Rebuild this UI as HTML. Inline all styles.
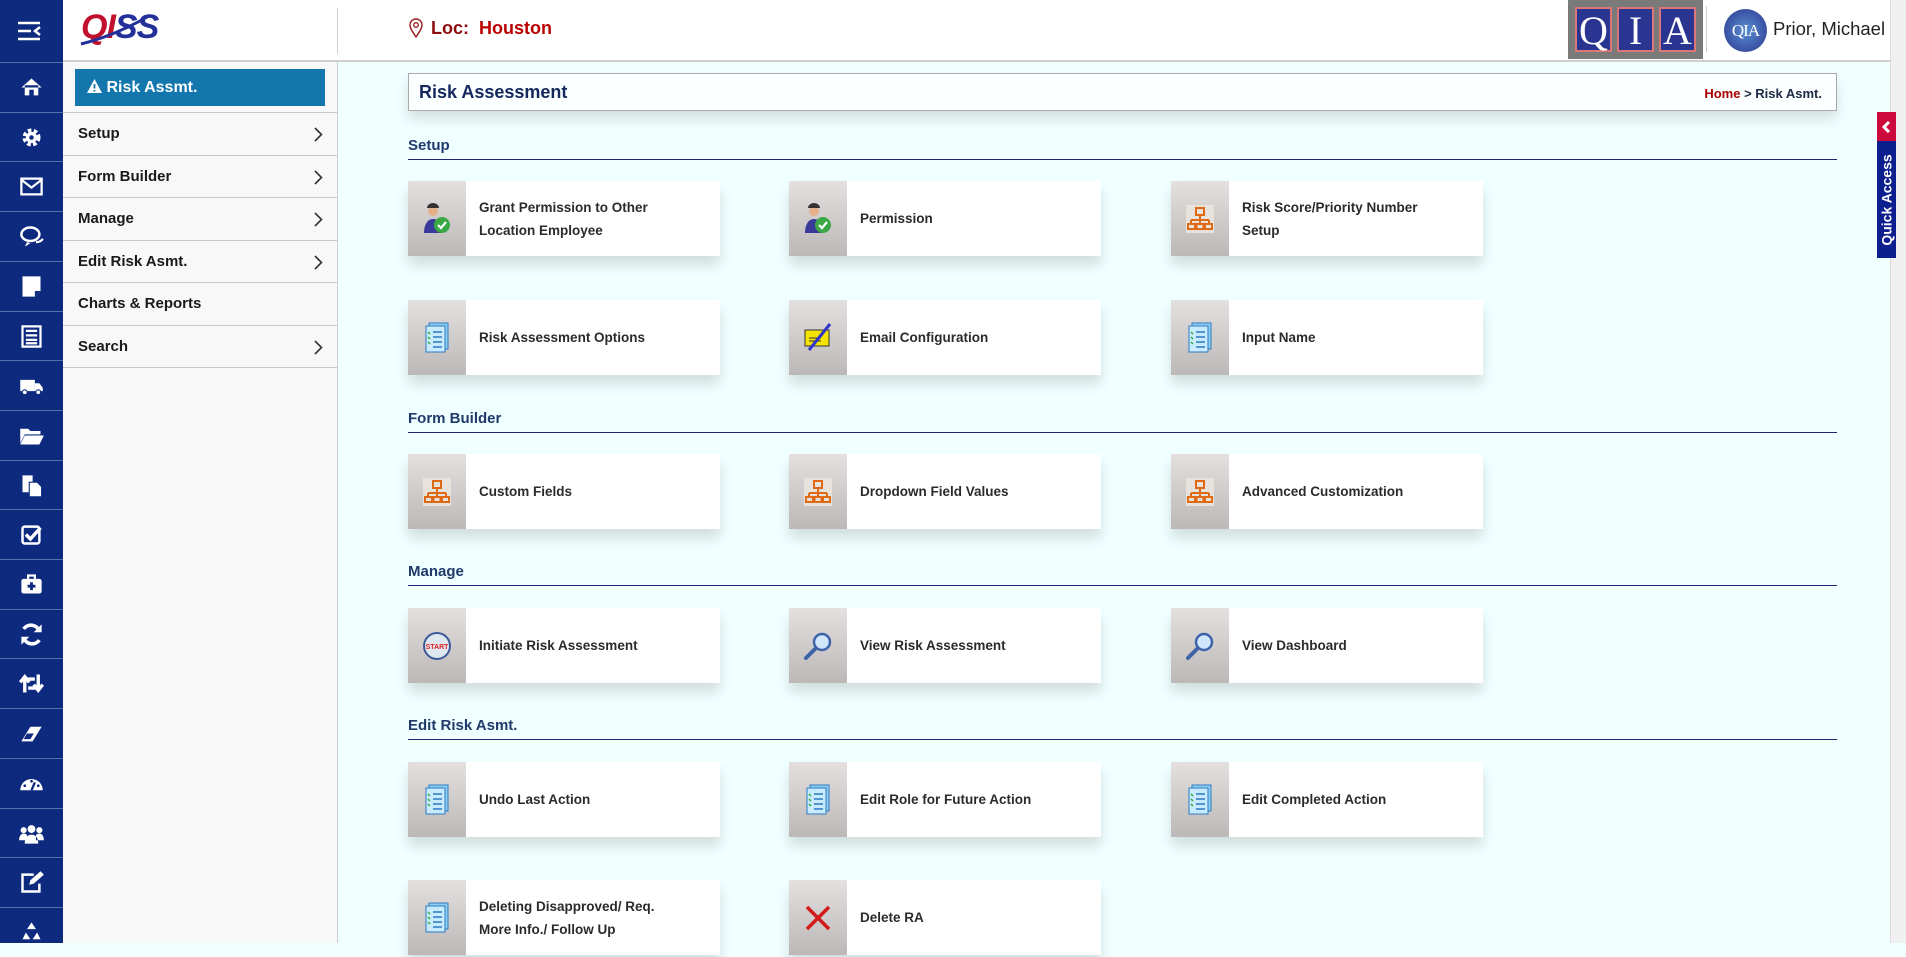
<!DOCTYPE html>
<html><head><meta charset="utf-8"><style>
*{margin:0;padding:0;box-sizing:border-box}
body{width:1906px;height:943px;overflow:hidden;background:#f0ffff;font-family:"Liberation Sans",sans-serif;position:relative}
.abs{position:absolute}
#bar{left:0;top:0;width:63px;height:943px;background:#0d2a7f}
#bar .ic{position:absolute;left:0;width:63px;height:50px;border-top:1px solid #5a6fae;display:flex;align-items:center;justify-content:center}
#hdr{left:63px;top:0;width:1827px;height:62px;background:#fff;border-bottom:2px solid #cfcfcf}
#side{left:63px;top:62px;width:275px;height:881px;background:#f8f8f8;border-right:1px solid #cfcfcf}
.mi{position:absolute;left:0;width:274px;height:43px;border-top:1px solid #c9c9c9;font-weight:bold;font-size:15px;color:#1a1a1a;padding-left:15px;line-height:42px}
.mi .ch{position:absolute;right:14px;top:14px}
.sec{position:absolute;left:408px;width:1429px;border-bottom:1.5px solid #1c2670;font-weight:bold;font-size:15px;color:#1f3a6b;height:23px}
.card{position:absolute;width:312px;height:75px;background:#fff;box-shadow:0 9px 12px rgba(0,0,0,0.13)}
.card .ico{position:absolute;left:0;top:0;width:58px;height:75px;background:linear-gradient(#e4e0e0,#bdb8b8);display:flex;align-items:center;justify-content:center}
.card .t{position:absolute;left:71px;top:0;height:75px;width:235px;display:flex;align-items:center;font-weight:bold;font-size:13.5px;color:#2b2b2b;line-height:23px}
</style></head><body>
<div id="bar" class="abs">
 <div style="position:absolute;left:16px;top:20px">
  <svg width="28" height="22" viewBox="0 0 28 22"><g stroke="#fff" stroke-width="2.5" fill="none"><path d="M2 3h22M2 11h13M2 19h22M24 7l-5 4 5 4"/></g></svg></div>
</div>
<div id="hdr" class="abs">
 <div class="abs" style="left:18px;top:8px;font-size:34px;font-weight:bold;color:#c0102e;letter-spacing:-1px;font-style:italic">QI<span style="color:#24309a">SS</span></div>
 <svg class="abs" style="left:16px;top:14px" width="72" height="34"><path d="M2 30 Q35 22 70 2" stroke="#24309a" stroke-width="3" fill="none"/></svg>
 <div class="abs" style="left:274px;top:8px;width:1px;height:46px;background:#d0d0d0"></div>
 <svg class="abs" style="left:346px;top:18px" width="14" height="20" viewBox="0 0 14 20"><path d="M7 19C3 13 1 10 1 7a6 6 0 0 1 12 0c0 3-2 6-6 12z" fill="none" stroke="#9b1c1c" stroke-width="1.4"/><circle cx="7" cy="7" r="2.3" fill="none" stroke="#9b1c1c" stroke-width="1.3"/></svg>
 <div class="abs" style="left:368px;top:18px;font-size:18px;font-weight:bold;color:#8b0d0d">Loc:&nbsp; <span style="color:#b00">Houston</span></div>
 <div class="abs" style="left:1505px;top:0;width:135px;height:59px;background:#7a7a7a;display:flex;gap:5px;padding:7px 7px;justify-content:center">
  <div style="width:37px;height:45px;background:#2a3591;border:2px solid #d77;color:#fff;font:40px 'Liberation Serif',serif;text-align:center;line-height:44px">Q</div>
  <div style="width:37px;height:45px;background:#2a3591;border:2px solid #d77;color:#fff;font:40px 'Liberation Serif',serif;text-align:center;line-height:44px">I</div>
  <div style="width:37px;height:45px;background:#2a3591;border:2px solid #d77;color:#fff;font:40px 'Liberation Serif',serif;text-align:center;line-height:44px">A</div>
 </div>
 <div class="abs" style="left:1643px;top:6px;width:1px;height:46px;background:#ccc"></div>
 <div class="abs" style="left:1661px;top:9px;width:43px;height:43px;border-radius:50%;background:radial-gradient(#5a8fd0,#2a3591);color:#fff;font:17px 'Liberation Serif',serif;text-align:center;line-height:43px;letter-spacing:-1px">QIA</div>
 <div class="abs" style="left:1710px;top:18px;font-size:18.5px;color:#222;white-space:nowrap">Prior, Michael</div>
</div>
<div class="abs" style="left:1890px;top:0;width:16px;height:943px;background:#f0f0f0;border-left:1px solid #ddd"></div>
<div id="side" class="abs">
 <div class="abs" style="left:12px;top:7px;width:250px;height:37px;background:#1376ad;color:#fff;font-weight:bold;font-size:16px;line-height:37px;padding-left:12px">
  <svg width="15" height="14" viewBox="0 0 15 14" style="vertical-align:-1px"><path d="M7.5 0L15 14H0z" fill="#fff"/><path d="M7.5 5v4.5M7.5 11v1.5" stroke="#1376ad" stroke-width="1.8"/></svg> Risk Assmt.</div>
 <div class="mi" style="top:50px">Setup<svg class="ch" width="9" height="15"><path d="M1 1l6.5 6.5L1 14" stroke="#333" stroke-width="1.6" fill="none"/></svg></div>
 <div class="mi" style="top:93px">Form Builder<svg class="ch" width="9" height="15"><path d="M1 1l6.5 6.5L1 14" stroke="#333" stroke-width="1.6" fill="none"/></svg></div>
 <div class="mi" style="top:135px">Manage<svg class="ch" width="9" height="15"><path d="M1 1l6.5 6.5L1 14" stroke="#333" stroke-width="1.6" fill="none"/></svg></div>
 <div class="mi" style="top:178px">Edit Risk Asmt.<svg class="ch" width="9" height="15"><path d="M1 1l6.5 6.5L1 14" stroke="#333" stroke-width="1.6" fill="none"/></svg></div>
 <div class="mi" style="top:220px">Charts &amp; Reports</div>
 <div class="mi" style="top:263px;border-bottom:1px solid #c9c9c9">Search<svg class="ch" width="9" height="15"><path d="M1 1l6.5 6.5L1 14" stroke="#333" stroke-width="1.6" fill="none"/></svg></div>
</div>
<div class="abs" style="left:408px;top:73px;width:1429px;height:38px;background:#fbffff;border:1px solid #aaa;box-shadow:0 8px 12px rgba(0,0,0,0.12)">
 <div class="abs" style="left:10px;top:8px;font-size:18px;font-weight:bold;color:#14275e">Risk Assessment</div>
 <div class="abs" style="right:14px;top:12px;font-size:13px;font-weight:bold;color:#1d2a44"><span style="color:#a00">Home</span> &gt; Risk Asmt.</div>
</div>
<div class="abs" style="left:1877px;top:112px;width:19px;height:146px;background:#0d1e8f">
 <div style="height:29px;background:#cc0a3c;display:flex;align-items:center;justify-content:center"><svg width="10" height="12"><path d="M7 1L2 6l5 5" stroke="#fff" stroke-width="3" fill="none"/></svg></div>
 <div style="position:absolute;left:0;top:29px;width:19px;height:117px;display:flex;align-items:center;justify-content:center"><div style="transform:rotate(-90deg);white-space:nowrap;color:#fff;font-weight:bold;font-size:14px">Quick Access</div></div>
</div>

<div class="sec" style="top:137px">Setup</div>
<div class="sec" style="top:410px">Form Builder</div>
<div class="sec" style="top:563px">Manage</div>
<div class="sec" style="top:717px">Edit Risk Asmt.</div>

<div id="cards"></div>
<script>
var P='<svg width="30" height="32" viewBox="0 0 30 32"><circle cx="11" cy="8" r="5" fill="#e3b08a"/><path d="M5 5a6 5 0 0 1 12 0z" fill="#333"/><path d="M2 30c0-9 4-14 9-14s9 4 9 14z" fill="#3a3a9a"/><circle cx="20" cy="22" r="8" fill="#3aa845"/><path d="M16 22l3 3 5-6" stroke="#fff" stroke-width="2.2" fill="none"/></svg>';
var D='<svg width="26" height="32" viewBox="0 0 26 32"><rect x="5" y="1" width="19" height="26" fill="#8fcdf0" stroke="#2b7bc2"/><rect x="2" y="4" width="19" height="26" fill="#c8ebff" stroke="#2b7bc2"/><g stroke="#2b7bc2" stroke-width="1.5"><path d="M9 10h9M9 15h9M9 20h9M9 25h9"/></g><g stroke="#3a3" stroke-width="1.5"><path d="M4 10l2 2M4 15l2 2M4 20l2 2"/></g></svg>';
var O='<svg width="28" height="28" viewBox="0 0 28 28" style="background:#e8e2dc"><g fill="none" stroke="#e06a14" stroke-width="2"><rect x="10" y="3" width="8" height="7"/><path d="M14 10v5M5 15h18M5 15v4M14 15v4M23 15v4"/><rect x="2" y="19" width="7" height="5"/><rect x="10.5" y="19" width="7" height="5"/><rect x="19" y="19" width="7" height="5"/></g></svg>';
var M='<svg width="30" height="32" viewBox="0 0 30 32"><rect x="2" y="8" width="24" height="16" fill="#f5e400" stroke="#333"/><path d="M6 16h12M6 19h12" stroke="#333"/><path d="M27 2L6 28" stroke="#2d36c8" stroke-width="3"/></svg>';
var S='<svg width="32" height="32" viewBox="0 0 32 32"><path d="M4 28l10-10" stroke="#3e63a8" stroke-width="4" stroke-linecap="round"/><circle cx="20" cy="12" r="8" fill="#cfe6fb" stroke="#3e63a8" stroke-width="2.5"/></svg>';
var T='<svg width="30" height="30" viewBox="0 0 30 30"><circle cx="15" cy="15" r="13" fill="#dfe7ef" stroke="#3c5a9a" stroke-width="2"/><text x="15" y="18" font-size="7" text-anchor="middle" font-weight="bold" fill="#d22" font-family="Liberation Sans">START</text></svg>';
var X='<svg width="30" height="30" viewBox="0 0 30 30"><path d="M4 4l22 22M26 4L4 26" stroke="#d21a1a" stroke-width="3.5"/></svg>';
var xs=[408,789,1171];
var rows=[[181,[[P,'Grant Permission to Other<br>Location Employee'],[P,'Permission'],[O,'Risk Score/Priority Number<br>Setup']]],
[300,[[D,'Risk Assessment Options'],[M,'Email Configuration'],[D,'Input Name']]],
[454,[[O,'Custom Fields'],[O,'Dropdown Field Values'],[O,'Advanced Customization']]],
[608,[[T,'Initiate Risk Assessment'],[S,'View Risk Assessment'],[S,'View Dashboard']]],
[762,[[D,'Undo Last Action'],[D,'Edit Role for Future Action'],[D,'Edit Completed Action']]],
[880,[[D,'Deleting Disapproved/ Req.<br>More Info./ Follow Up'],[X,'Delete RA']]]];
var h='';rows.forEach(function(r){r[1].forEach(function(c,i){h+='<div class="card" style="left:'+xs[i]+'px;top:'+r[0]+'px"><div class="ico">'+c[0]+'</div><div class="t"><div>'+c[1]+'</div></div></div>';});});
document.getElementById('cards').innerHTML=h;
var icons=[
'<path d="M3 12L12 4l9 8M6 10v9h4v-5h4v5h4v-9" fill="#fff"/>',
'<circle cx="12" cy="12" r="6" fill="none" stroke="#fff" stroke-width="4" stroke-dasharray="3 2"/><circle cx="12" cy="12" r="5" fill="#fff"/><circle cx="12" cy="12" r="2" fill="#0d2a7f"/>',
'<rect x="3" y="5" width="18" height="14" fill="none" stroke="#fff" stroke-width="2"/><path d="M3 6l9 7 9-7" fill="none" stroke="#fff" stroke-width="2"/>',
'<ellipse cx="11" cy="10" rx="8" ry="6" fill="none" stroke="#fff" stroke-width="2.2"/><path d="M8 17l-2 4 5-3" fill="#fff"/><path d="M16 17c3 0 5-1 6-3" stroke="#fff" stroke-width="2" fill="none"/>',
'<path d="M4 3h16v13l-5 5H4z" fill="#fff"/><path d="M15 21v-5h5" fill="#0d2a7f"/>',
'<rect x="4" y="3" width="16" height="18" fill="none" stroke="#fff" stroke-width="2"/><path d="M7 7h10M7 11h10M7 15h10M7 18h10" stroke="#fff" stroke-width="2"/>',
'<rect x="2" y="7" width="13" height="10" fill="#fff"/><path d="M15 10h4l3 4v3h-7z" fill="#fff"/><circle cx="6" cy="18" r="2.2" fill="#fff" stroke="#0d2a7f"/><circle cx="18" cy="18" r="2.2" fill="#fff" stroke="#0d2a7f"/>',
'<path d="M2 6h7l2 2h9v3H6L2 19z" fill="#fff"/><path d="M6 12h17l-4 8H2z" fill="#fff"/>',
'<rect x="4" y="3" width="9" height="15" fill="#fff"/><path d="M10 9h7l4 4v9H10z" fill="#fff" stroke="#0d2a7f"/>',
'<rect x="4" y="5" width="15" height="15" rx="2" fill="none" stroke="#fff" stroke-width="2.2"/><path d="M7 12l4 4 9-10" stroke="#fff" stroke-width="3" fill="none"/>',
'<rect x="3" y="7" width="18" height="13" rx="2" fill="#fff"/><path d="M9 7V4h6v3" stroke="#fff" stroke-width="2" fill="none"/><path d="M12 10v7M8.5 13.5h7" stroke="#0d2a7f" stroke-width="2.5"/>',
'<path d="M19 9a8 8 0 0 0-14-2M5 15a8 8 0 0 0 14 2" stroke="#fff" stroke-width="3.2" fill="none"/><path d="M21 3v7h-7zM3 21v-7h7z" fill="#fff"/>',
'<path d="M6 20V8M2 11l4-5 4 5M6 8h9M18 4v12M14 13l4 5 4-5M18 16H9" stroke="#fff" stroke-width="3" fill="none"/>',
'<path d="M3 19l8-13h10l-8 13z" fill="#fff"/><path d="M5 17l3-5h6l-3 5z" fill="#0d2a7f"/>',
'<path d="M2 18a10 10 0 0 1 20 0z" fill="#fff"/><path d="M12 18l3-7" stroke="#0d2a7f" stroke-width="2"/><circle cx="6" cy="14" r="1.2" fill="#0d2a7f"/><circle cx="18" cy="14" r="1.2" fill="#0d2a7f"/><circle cx="12" cy="10" r="1.2" fill="#0d2a7f"/>',
'<circle cx="12" cy="8" r="3.5" fill="#fff"/><circle cx="5" cy="9" r="2.7" fill="#fff"/><circle cx="19" cy="9" r="2.7" fill="#fff"/><path d="M6 21c0-6 3-8 6-8s6 2 6 8zM1 18c0-4 2-6 4-6s3 1 3 2v4zM23 18c0-4-2-6-4-6s-3 1-3 2v4z" fill="#fff"/>',
'<path d="M14 5H4v15h15v-7" stroke="#fff" stroke-width="2.2" fill="none"/><path d="M10 14l1-4 9-8 3 3-9 8z" fill="#fff"/>',
'<path d="M12 3l4 6h-8zM4 18l3-6 4 6zM20 18l-3-6-4 6z" fill="#fff"/>'];
var b='';for(var i=0;i<icons.length;i++){b+='<div class="ic" style="top:'+(62+i*49.7)+'px"><svg width="27" height="27" viewBox="0 0 24 24">'+icons[i]+'</svg></div>';}
document.getElementById('bar').insertAdjacentHTML('beforeend',b);
</script>
</body></html>
